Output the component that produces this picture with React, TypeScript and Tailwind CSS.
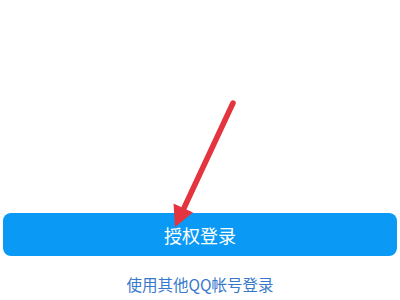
export default function App() {
  return (
    <div
      className="relative w-[400px] h-[300px] bg-white overflow-hidden flex flex-col items-stretch"
      style={{ fontFamily: '"Noto Sans CJK SC", "Noto Sans", sans-serif' }}
    >
      <div className="pt-[213px] px-[3px]">
        <button className="w-full h-[43px] rounded-[8px] bg-[#0a9af6] text-white text-[18px] leading-none flex items-center justify-center">
          授权登录
        </button>
      </div>
      <div className="mt-[18px] text-center text-[15.5px] leading-[20px] text-[#3878cc]">
        使用其他QQ帐号登录
      </div>
      <svg
        className="absolute inset-0 pointer-events-none"
        width="400"
        height="300"
        viewBox="0 0 400 300"
      >
        <line
          x1="233"
          y1="103"
          x2="184"
          y2="208"
          stroke="#e3343f"
          strokeWidth="5.5"
          strokeLinecap="round"
        />
        <polygon points="175,227 173.5,203.5 193,212.5" fill="#e3343f" />
      </svg>
    </div>
  );
}
